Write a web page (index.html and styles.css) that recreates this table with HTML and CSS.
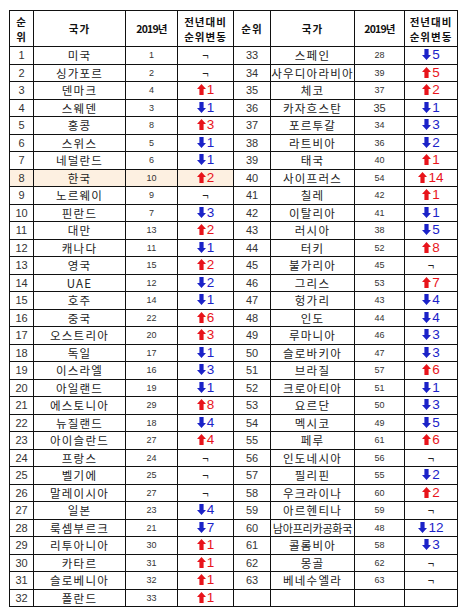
FILE: index.html
```html
<!DOCTYPE html>
<html lang="ko">
<head>
<meta charset="utf-8">
<title>순위</title>
<link rel="stylesheet" href="styles.css">
</head>
<body>
<svg width="0" height="0" class="defs">
  <defs>
    <symbol id="au" viewBox="0 0 9 11"><polygon points="4.5,0 9,5 6.6,5 6.6,11 2.4,11 2.4,5 0,5"/></symbol>
    <symbol id="ad" viewBox="0 0 9 11"><polygon points="4.5,11 9,6 6.6,6 6.6,0 2.4,0 2.4,6 0,6"/></symbol>
  </defs>
</svg>
<table class="rank">
  <colgroup>
    <col class="c1"><col class="c2"><col class="c3"><col class="c4">
    <col class="c5"><col class="c6"><col class="c7"><col class="c8">
  </colgroup>
  <thead>
    <tr>
      <th>순<br>위</th><th>국가</th><th class="yr">2019년</th><th>전년대비<br>순위변동</th>
      <th>순위</th><th>국가</th><th class="yr">2019년</th><th>전년대비<br>순위변동</th>
    </tr>
  </thead>
  <tbody>
    <tr><td class="n">1</td><td class="k">미국</td><td class="y">1</td><td class="d">¬</td><td class="n">33</td><td class="k">스페인</td><td class="y">28</td><td class="c dn"><svg><use href="#ad"/></svg>5</td></tr>
    <tr><td class="n">2</td><td class="k">싱가포르</td><td class="y">2</td><td class="d">¬</td><td class="n">34</td><td class="k">사우디아라비아</td><td class="y">39</td><td class="c up"><svg><use href="#au"/></svg>5</td></tr>
    <tr><td class="n">3</td><td class="k">덴마크</td><td class="y">4</td><td class="c up"><svg><use href="#au"/></svg>1</td><td class="n">35</td><td class="k">체코</td><td class="y">37</td><td class="c up"><svg><use href="#au"/></svg>2</td></tr>
    <tr><td class="n">4</td><td class="k">스웨덴</td><td class="y">3</td><td class="c dn"><svg><use href="#ad"/></svg>1</td><td class="n">36</td><td class="k">카자흐스탄</td><td class="y big">35</td><td class="c dn"><svg><use href="#ad"/></svg>1</td></tr>
    <tr><td class="n">5</td><td class="k">홍콩</td><td class="y">8</td><td class="c up"><svg><use href="#au"/></svg>3</td><td class="n">37</td><td class="k">포르투갈</td><td class="y">34</td><td class="c dn"><svg><use href="#ad"/></svg>3</td></tr>
    <tr><td class="n">6</td><td class="k">스위스</td><td class="y">5</td><td class="c dn"><svg><use href="#ad"/></svg>1</td><td class="n">38</td><td class="k">라트비아</td><td class="y">36</td><td class="c dn"><svg><use href="#ad"/></svg>2</td></tr>
    <tr><td class="n">7</td><td class="k">네덜란드</td><td class="y">6</td><td class="c dn"><svg><use href="#ad"/></svg>1</td><td class="n">39</td><td class="k">태국</td><td class="y">40</td><td class="c up"><svg><use href="#au"/></svg>1</td></tr>
    <tr><td class="n hl">8</td><td class="k hl">한국</td><td class="y hl">10</td><td class="c up hl"><svg><use href="#au"/></svg>2</td><td class="n">40</td><td class="k">사이프러스</td><td class="y">54</td><td class="c up"><svg><use href="#au"/></svg>14</td></tr>
    <tr><td class="n">9</td><td class="k">노르웨이</td><td class="y">9</td><td class="d">¬</td><td class="n">41</td><td class="k">칠레</td><td class="y">42</td><td class="c up"><svg><use href="#au"/></svg>1</td></tr>
    <tr><td class="n">10</td><td class="k">핀란드</td><td class="y">7</td><td class="c dn"><svg><use href="#ad"/></svg>3</td><td class="n">42</td><td class="k">이탈리아</td><td class="y">41</td><td class="c dn"><svg><use href="#ad"/></svg>1</td></tr>
    <tr><td class="n">11</td><td class="k">대만</td><td class="y">13</td><td class="c up"><svg><use href="#au"/></svg>2</td><td class="n">43</td><td class="k">러시아</td><td class="y">38</td><td class="c dn"><svg><use href="#ad"/></svg>5</td></tr>
    <tr><td class="n">12</td><td class="k">캐나다</td><td class="y">11</td><td class="c dn"><svg><use href="#ad"/></svg>1</td><td class="n">44</td><td class="k">터키</td><td class="y">52</td><td class="c up"><svg><use href="#au"/></svg>8</td></tr>
    <tr><td class="n">13</td><td class="k">영국</td><td class="y">15</td><td class="c up"><svg><use href="#au"/></svg>2</td><td class="n">45</td><td class="k">불가리아</td><td class="y">45</td><td class="d">¬</td></tr>
    <tr><td class="n">14</td><td class="k">UAE</td><td class="y">12</td><td class="c dn"><svg><use href="#ad"/></svg>2</td><td class="n">46</td><td class="k">그리스</td><td class="y">53</td><td class="c up"><svg><use href="#au"/></svg>7</td></tr>
    <tr><td class="n">15</td><td class="k">호주</td><td class="y">14</td><td class="c dn"><svg><use href="#ad"/></svg>1</td><td class="n">47</td><td class="k">헝가리</td><td class="y">43</td><td class="c dn"><svg><use href="#ad"/></svg>4</td></tr>
    <tr><td class="n">16</td><td class="k">중국</td><td class="y">22</td><td class="c up"><svg><use href="#au"/></svg>6</td><td class="n">48</td><td class="k">인도</td><td class="y">44</td><td class="c dn"><svg><use href="#ad"/></svg>4</td></tr>
    <tr><td class="n">17</td><td class="k">오스트리아</td><td class="y">20</td><td class="c up"><svg><use href="#au"/></svg>3</td><td class="n">49</td><td class="k">루마니아</td><td class="y">46</td><td class="c dn"><svg><use href="#ad"/></svg>3</td></tr>
    <tr><td class="n">18</td><td class="k">독일</td><td class="y">17</td><td class="c dn"><svg><use href="#ad"/></svg>1</td><td class="n">50</td><td class="k">슬로바키아</td><td class="y">47</td><td class="c dn"><svg><use href="#ad"/></svg>3</td></tr>
    <tr><td class="n">19</td><td class="k">이스라엘</td><td class="y">16</td><td class="c dn"><svg><use href="#ad"/></svg>3</td><td class="n">51</td><td class="k">브라질</td><td class="y">57</td><td class="c up"><svg><use href="#au"/></svg>6</td></tr>
    <tr><td class="n">20</td><td class="k">아일랜드</td><td class="y">19</td><td class="c dn"><svg><use href="#ad"/></svg>1</td><td class="n">52</td><td class="k">크로아티아</td><td class="y">51</td><td class="c dn"><svg><use href="#ad"/></svg>1</td></tr>
    <tr><td class="n">21</td><td class="k">에스토니아</td><td class="y">29</td><td class="c up"><svg><use href="#au"/></svg>8</td><td class="n">53</td><td class="k">요르단</td><td class="y">50</td><td class="c dn"><svg><use href="#ad"/></svg>3</td></tr>
    <tr><td class="n">22</td><td class="k">뉴질랜드</td><td class="y">18</td><td class="c dn"><svg><use href="#ad"/></svg>4</td><td class="n">54</td><td class="k">멕시코</td><td class="y">49</td><td class="c dn"><svg><use href="#ad"/></svg>5</td></tr>
    <tr><td class="n">23</td><td class="k">아이슬란드</td><td class="y">27</td><td class="c up"><svg><use href="#au"/></svg>4</td><td class="n">55</td><td class="k">페루</td><td class="y">61</td><td class="c up"><svg><use href="#au"/></svg>6</td></tr>
    <tr><td class="n">24</td><td class="k">프랑스</td><td class="y">24</td><td class="d">¬</td><td class="n">56</td><td class="k">인도네시아</td><td class="y">56</td><td class="d">¬</td></tr>
    <tr><td class="n">25</td><td class="k">벨기에</td><td class="y">25</td><td class="d">¬</td><td class="n">57</td><td class="k">필리핀</td><td class="y">55</td><td class="c dn"><svg><use href="#ad"/></svg>2</td></tr>
    <tr><td class="n">26</td><td class="k">말레이시아</td><td class="y">27</td><td class="d">¬</td><td class="n">58</td><td class="k">우크라이나</td><td class="y">60</td><td class="c up"><svg><use href="#au"/></svg>2</td></tr>
    <tr><td class="n">27</td><td class="k">일본</td><td class="y">23</td><td class="c dn"><svg><use href="#ad"/></svg>4</td><td class="n">59</td><td class="k">아르헨티나</td><td class="y">59</td><td class="d">¬</td></tr>
    <tr><td class="n">28</td><td class="k">룩셈부르크</td><td class="y">21</td><td class="c dn"><svg><use href="#ad"/></svg>7</td><td class="n">60</td><td class="k tight">남아프리카공화국</td><td class="y">48</td><td class="c dn"><svg><use href="#ad"/></svg>12</td></tr>
    <tr><td class="n">29</td><td class="k">리투아니아</td><td class="y">30</td><td class="c up"><svg><use href="#au"/></svg>1</td><td class="n">61</td><td class="k">콜롬비아</td><td class="y">58</td><td class="c dn"><svg><use href="#ad"/></svg>3</td></tr>
    <tr><td class="n">30</td><td class="k">카타르</td><td class="y">31</td><td class="c up"><svg><use href="#au"/></svg>1</td><td class="n">62</td><td class="k">몽골</td><td class="y">62</td><td class="d">¬</td></tr>
    <tr><td class="n">31</td><td class="k">슬로베니아</td><td class="y">32</td><td class="c up"><svg><use href="#au"/></svg>1</td><td class="n">63</td><td class="k">베네수엘라</td><td class="y">63</td><td class="d">¬</td></tr>
    <tr><td class="n">32</td><td class="k">폴란드</td><td class="y">33</td><td class="c up"><svg><use href="#au"/></svg>1</td><td class="n"></td><td class="k"></td><td class="y"></td><td class="d"></td></tr>
  </tbody>
</table>
</body>
</html>
```

FILE: styles.css
```css
html, body {
  margin: 0;
  padding: 0;
  background: #fff;
}
body {
  padding: 10px 0 0 9px;
  font-family: "Noto Sans CJK KR", "Liberation Sans", sans-serif;
  color: #222;
}
.defs {
  position: absolute;
  width: 0;
  height: 0;
}
.rank {
  border-collapse: collapse;
  table-layout: fixed;
  width: 448px;
}
.c1 { width: 24px; }
.c2 { width: 92px; }
.c3 { width: 52px; }
.c4 { width: 56px; }
.c5 { width: 37px; }
.c6 { width: 84px; }
.c7 { width: 50px; }
.c8 { width: 53px; }

.rank th, .rank td {
  border: 1px solid #111;
  padding: 0;
  text-align: center;
  vertical-align: middle;
  white-space: nowrap;
  overflow: hidden;
}
.rank th {
  height: 35px;
  font-size: 10.5px;
  line-height: 15px;
  font-weight: 700;
  letter-spacing: 1px;
  color: #111;
}
.rank th.yr {
  letter-spacing: -0.8px;
}
.rank td {
  height: 16.5px;
  line-height: 14px;
}
.rank td.n {
  font-family: "Liberation Sans", sans-serif;
  font-size: 11px;
  color: #333;
}
.rank td.k {
  font-size: 11.5px;
  letter-spacing: 1.2px;
  color: #222;
}
.rank td.k.tight {
  font-size: 11px;
  letter-spacing: -0.2px;
}
.rank td.y {
  font-family: "Liberation Sans", sans-serif;
  font-size: 9px;
  color: #333;
}
.rank td.y.big {
  font-size: 11px;
}
.rank td.d {
  font-family: "Liberation Sans", sans-serif;
  font-size: 11px;
  color: #222;
}
.rank td.c {
  font-family: "Liberation Sans", sans-serif;
  font-size: 13.5px;
}
.rank td.c svg {
  width: 9px;
  height: 11px;
  margin-right: 1px;
  vertical-align: -1px;
}
.rank td.up {
  color: #e8141b;
  fill: #e8141b;
}
.rank td.dn {
  color: #1b22c8;
  fill: #1b22c8;
}
.rank td.hl {
  background: #fdf0e1;
}
```
